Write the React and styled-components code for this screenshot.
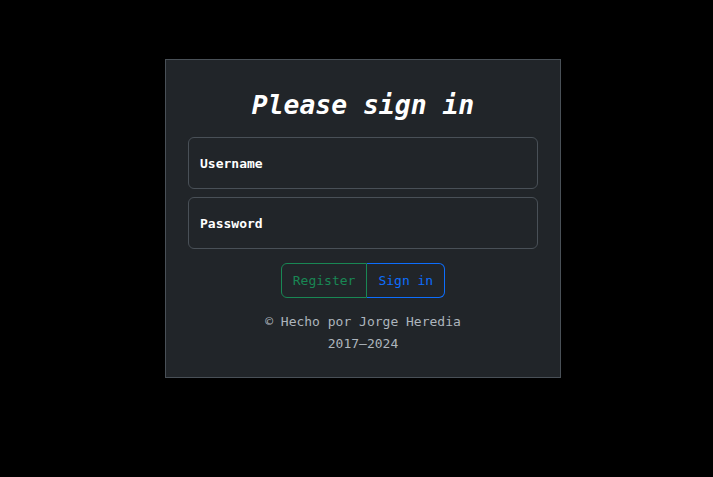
import React from "react";
import styled, { createGlobalStyle } from "styled-components";

const GlobalStyle = createGlobalStyle`
  html, body {
    margin: 0;
    background: #000;
    font-family: "DejaVu Sans Mono", monospace;
  }
`;

const Page = styled.main`
  min-height: 477px;
  display: flex;
  justify-content: center;
  align-items: flex-start;
  padding: 59px 0 0 13px;
  box-sizing: border-box;
`;

const Card = styled.form`
  width: 396px;
  box-sizing: border-box;
  background: #212529;
  border: 1px solid #495057;
  padding: 27px 22px 22px;
  display: flex;
  flex-direction: column;
  align-items: stretch;
`;

const Title = styled.h1`
  margin: 0 0 14px;
  font-size: 26.4px;
  line-height: 36px;
  font-weight: bold;
  font-style: italic;
  color: #fff;
  text-align: center;
`;

const Field = styled.label`
  display: flex;
  align-items: center;
  height: 52px;
  box-sizing: border-box;
  padding: 0 11px;
  margin-bottom: ${(p) => (p.last ? "0" : "8px")};
  border: 1px solid #495057;
  border-radius: 6px;
  background: #212529;
  color: #fff;
  font-size: 13px;
  font-weight: bold;
`;

const ButtonGroup = styled.div`
  display: flex;
  justify-content: center;
  margin: 14px 0 13px;
`;

const OutlineButton = styled.button`
  height: 35px;
  padding: 0 11px;
  font-family: inherit;
  font-size: 13px;
  background: transparent;
  color: ${(p) => p.color};
  border: 1px solid ${(p) => p.color};
  border-left-width: ${(p) => (p.first ? "1px" : "0")};
  border-radius: ${(p) => (p.first ? "6px 0 0 6px" : "0 6px 6px 0")};
  cursor: pointer;
`;

const Footer = styled.p`
  margin: 0;
  text-align: center;
  color: #adb5bd;
  font-size: 13px;
  line-height: 22px;
`;

export default function App() {
  return (
    <>
      <GlobalStyle />
      <Page>
        <Card onSubmit={(e) => e.preventDefault()}>
          <Title>Please sign in</Title>
          <Field>Username</Field>
          <Field last>Password</Field>
          <ButtonGroup>
            <OutlineButton first color="#198754" type="button">
              Register
            </OutlineButton>
            <OutlineButton color="#0d6efd" type="submit">
              Sign in
            </OutlineButton>
          </ButtonGroup>
          <Footer>
            © Hecho por Jorge Heredia
            <br />
            2017–2024
          </Footer>
        </Card>
      </Page>
    </>
  );
}
